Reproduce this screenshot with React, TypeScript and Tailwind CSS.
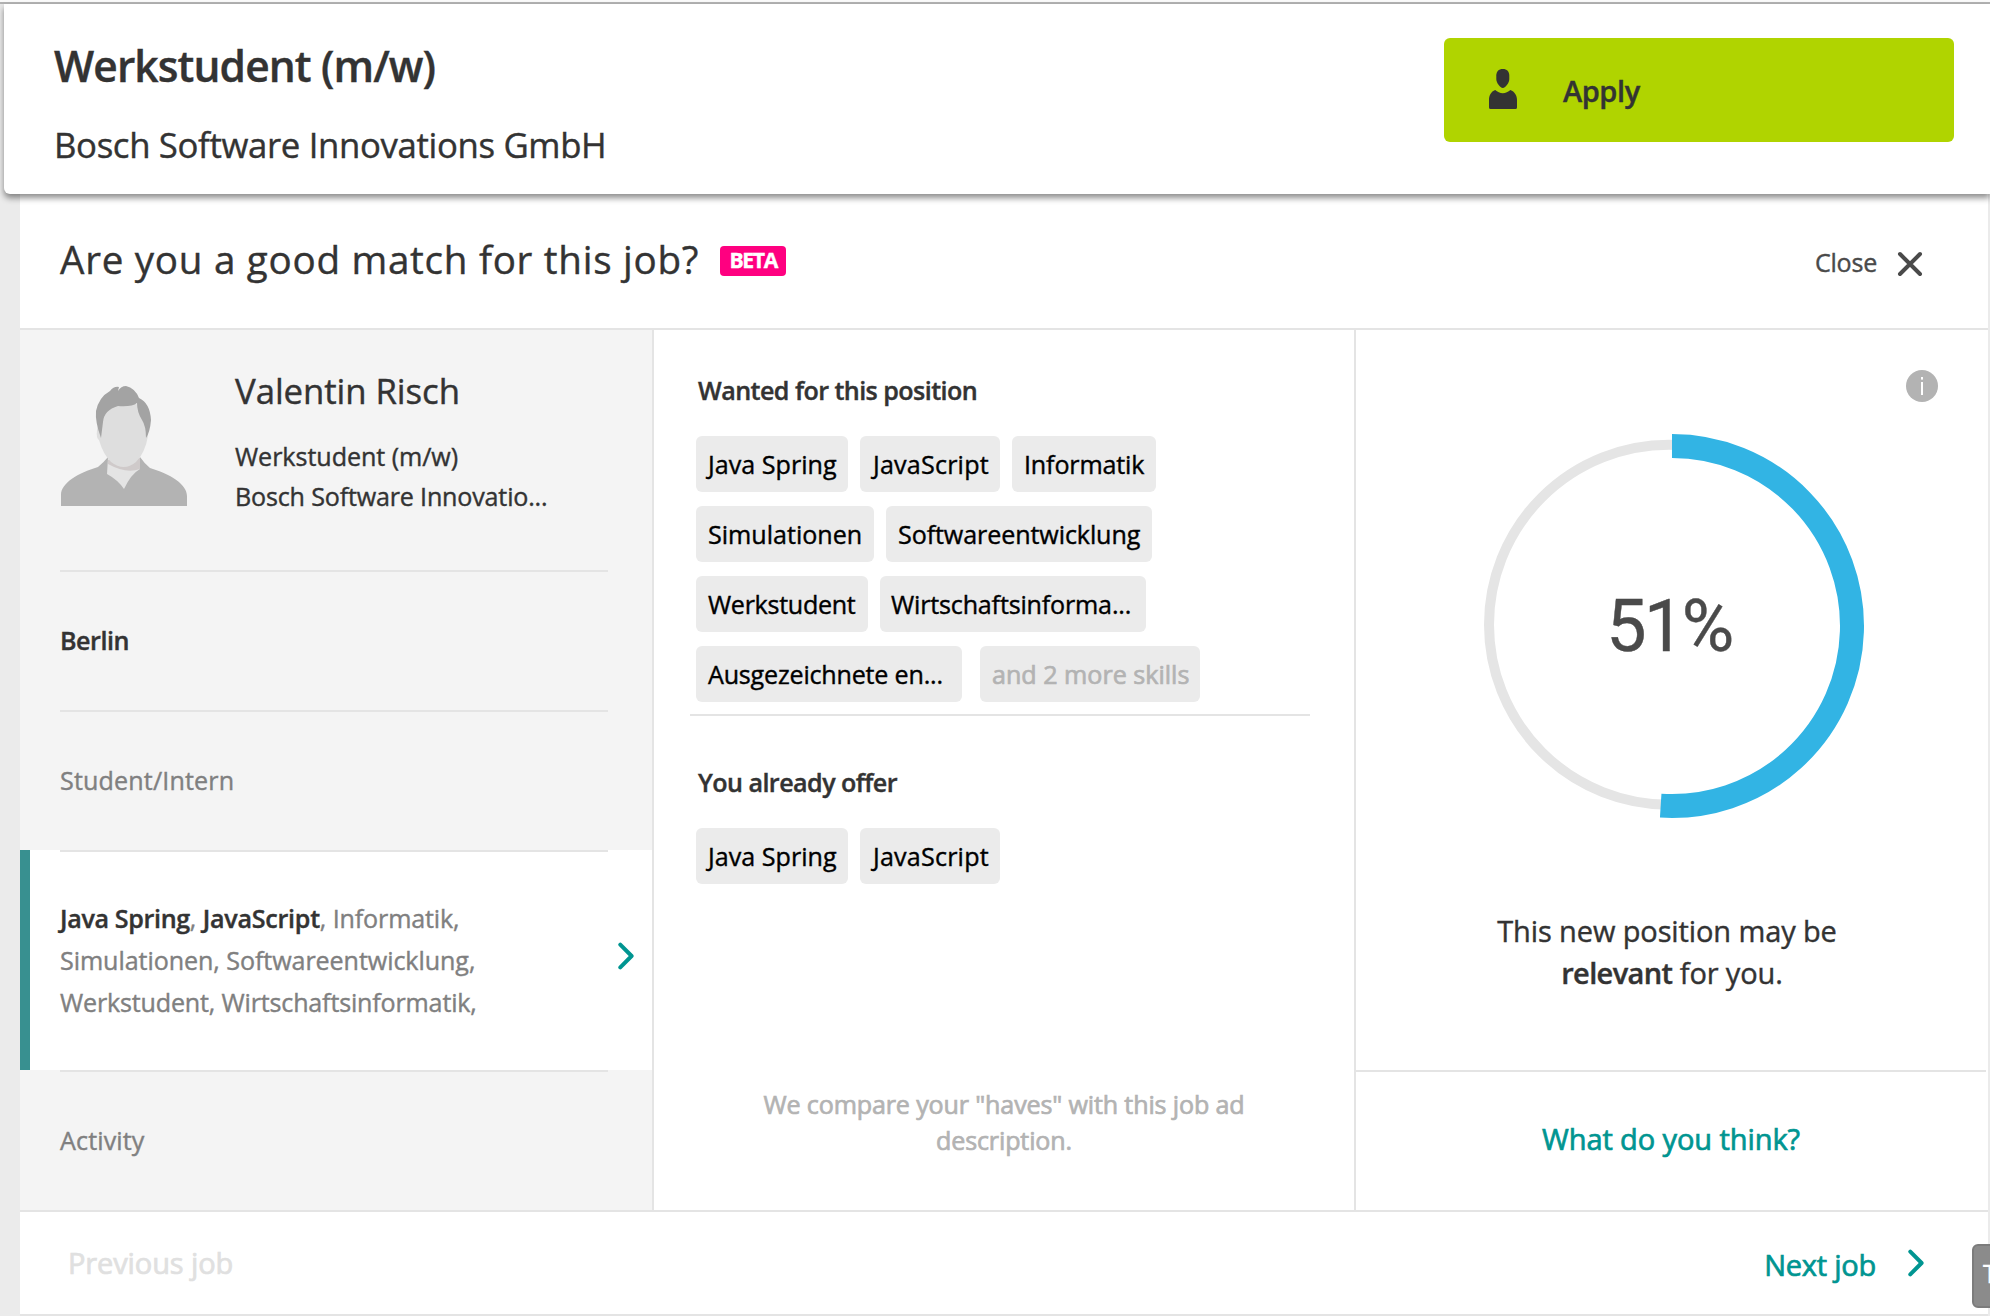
import type { ReactNode } from 'react';

type Skill = { label: string; className: string };

const wanted: Skill[][] = [
  [
    { label: 'Java Spring', className: 'w-[152px] tracking-[0.001em]' },
    { label: 'JavaScript', className: 'w-[140px] indent-[1px] tracking-[0.008em]' },
    { label: 'Informatik', className: 'w-[144px] tracking-[-0.006em]' },
  ],
  [
    { label: 'Simulationen', className: 'w-[178px]' },
    { label: 'Softwareentwicklung', className: 'w-[266px] tracking-[-0.004em]' },
  ],
  [
    { label: 'Werkstudent', className: 'w-[172px] tracking-[-0.012em]' },
    { label: 'Wirtschaftsinforma...', className: 'w-[266px] indent-[-1px] tracking-[-0.007em]' },
  ],
  [{ label: 'Ausgezeichnete en...', className: 'w-[266px] tracking-[-0.008em]' }],
];

const offered: Skill[] = wanted[0].slice(0, 2);

function Tag({ label, className }: Skill) {
  return (
    <span className={`h-14 rounded-md bg-[#ebebeb] px-3 leading-[56px] whitespace-nowrap text-black ${className}`}>
      {label}
    </span>
  );
}

function PersonIcon() {
  return (
    <svg width="28" height="40" viewBox="0 0 28 40" className="fill-[#333]">
      <path d="M13.8 0C18 0 20.3 2.7 20.3 6.6V10C20.3 13.6 16.6 19 13.8 19C11 19 7.3 13.6 7.3 10V6.6C7.3 2.7 9.6 0 13.8 0Z" />
      <path d="M6.2 21C8.4 22.6 11 24.2 13.8 24.2C16.6 24.2 19.2 22.6 21.4 21C25.6 22.6 28 26.6 28 30.8V38.4Q28 40 26.4 40H1.6Q0 40 0 38.4V30.8C0 26.6 2 22.6 6.2 21Z" />
    </svg>
  );
}

function Chevron() {
  return (
    <svg width="17" height="28" viewBox="0 0 17 28" fill="none" className="stroke-[#009591]">
      <path d="M2.3 2.6L13.6 14L2.3 25.4" strokeWidth="4" strokeLinecap="round" strokeLinejoin="round" />
    </svg>
  );
}

function Avatar() {
  return (
    <svg width="128" height="128" viewBox="0 0 128 128" className="bg-[#f4f4f4]">
      <path d="M1 128V117C1 105 18 95 38 89Q44 84 48 79H80Q84 85 90 90C110 96 127 106 127 118V128Z" fill="#b3b3b3" />
      <path d="M48 80L80 79V91Q71 96 64 111Q58 102 47 96Z" fill="#e4e4e4" />
      <path d="M48 82L80 80V91Q66 96 48 86Z" fill="#cfcaca" />
      <path d="M40 36Q43 24 64 24Q82 24 86 36L88 58Q85 75 76 84Q64 94 51 84Q43 76 39 62Q36 60 37 52Z" fill="#dedede" />
      <path d="M41 60Q35 44 36 33Q39 19 50 13Q54 8 59 9L58 13Q61 8 66 8Q75 10 79 20Q90 25 91 42Q90 54 86 60Q86 48 82 42Q77 34 77 25Q72 29 58 28Q44 32 43 44Z" fill="#a3a3a3" />
    </svg>
  );
}

function ProfileRow({ children }: { children: ReactNode }) {
  return (
    <div className="h-[140px] pr-11 pl-10">
      <div className="flex h-full items-center border-t-2 border-[#e4e4e4]">{children}</div>
    </div>
  );
}

function ScoreRing({ percent }: { percent: number }) {
  const angle = (percent / 100) * 2 * Math.PI;
  const endX = 196 + 180 * Math.sin(angle);
  const endY = 196 - 180 * Math.cos(angle);
  return (
    <div className="relative mt-7 ml-[120px] size-[392px]">
      <svg width="392" height="392" viewBox="0 0 392 392" fill="none">
        <circle cx="193" cy="194.7" r="180" stroke="#e5e5e5" strokeWidth="10" />
        <path d={`M196 16A180 180 0 1 1 ${endX} ${endY}`} stroke="#32b4e4" strokeWidth="24" />
      </svg>
      <div className="absolute inset-x-0 top-[147px] pr-1.5 text-center font-['Roboto',sans-serif] text-[71.7px] leading-[100px] tracking-[-0.035em] text-[#4a4a4a]">
        {percent}%
      </div>
    </div>
  );
}

export default function App() {
  return (
    <div className="relative flex h-[1316px] w-[1990px] flex-col overflow-hidden bg-[#ebebeb] font-['Open_Sans',sans-serif] text-[25.1px] text-[#333] [-webkit-text-stroke:0.4px]">
      <div className="h-1 shrink-0 border-b-2 border-[#b3b3b3] bg-[#fafafa]" />

      <header className="relative z-10 ml-1 flex h-[190px] shrink-0 items-start rounded-bl-md bg-white shadow-[0_4px_6px_0_rgba(0,0,0,0.45)]">
        <div className="pt-[34px] pl-[50px]">
          <h1 className="text-[42.5px] leading-[56px] font-semibold tracking-[-0.021em]">Werkstudent (m/w)</h1>
          <p className="mt-[29px] text-[34.75px] leading-[44px] tracking-[-0.01em]">Bosch Software Innovations GmbH</p>
        </div>
        <button className="mt-[34px] mr-9 ml-auto flex h-[104px] w-[510px] items-center rounded-md bg-[#b0d400] pb-0.5 pl-[45px]">
          <PersonIcon />
          <span className="mt-1 ml-[46px] text-[29px] font-semibold tracking-[-0.015em]">Apply</span>
        </button>
      </header>

      <main className="mr-0.5 ml-5 flex flex-1 flex-col bg-white">
        <section className="flex h-[136px] items-center border-b-2 border-[#e4e4e4] pr-[65px] pl-10">
          <h2 className="mb-[3px] text-[38.6px] tracking-[0.019em]">Are you a good match for this job?</h2>
          <span className="ml-[21px] h-[30px] w-[66px] rounded bg-[#ff0080] text-center text-[21.2px] leading-[28px] font-bold tracking-[-0.065em] text-white">
            BETA
          </span>
          <button className="ml-auto flex items-center pt-1 text-[#4a4a4a]">
            <span className="tracking-[-0.01em]">Close</span>
            <svg width="26" height="26" viewBox="0 0 26 26" className="mt-0.5 ml-5 stroke-[#4a4a4a]">
              <path d="M3 3L23 23M23 3L3 23" strokeWidth="4" strokeLinecap="round" />
            </svg>
          </button>
        </section>

        <section className="grid h-[880px] grid-cols-[634px_702px_632px]">
          <aside className="border-r-2 border-[#e4e4e4] bg-[#f4f4f4]">
            <div className="flex h-60 pt-12 pl-10">
              <Avatar />
              <div className="ml-[47px]">
                <div className="-mt-[9px] text-[34.75px] leading-[44px] tracking-[-0.002em]">Valentin Risch</div>
                <div className="mt-[23px] leading-10 tracking-[-0.002em]">Werkstudent (m/w)</div>
                <div className="leading-10 tracking-[-0.007em]">Bosch Software Innovatio...</div>
              </div>
            </div>
            <ProfileRow>
              <b className="font-semibold tracking-[-0.018em]">Berlin</b>
            </ProfileRow>
            <ProfileRow>
              <span className="tracking-[0.006em] text-[#808080]">Student/Intern</span>
            </ProfileRow>
            <div className="flex h-[220px] items-start border-l-10 border-[#389090] bg-white pl-[30px]">
              <p className="h-full w-[548px] border-t-2 border-[#e4e4e4] pt-[45px] leading-[42px] tracking-[-0.003em] text-[#808080]">
                <b className="font-semibold tracking-[-0.014em] text-[#333]">Java Spring</b>,{' '}
                <b className="font-semibold tracking-[-0.01em] text-[#333]">JavaScript</b>,{' '}
                <span className="tracking-[-0.006em]">Informatik,</span>
                <br />
                Simulationen, Softwareentwicklung,
                <br />
                <span className="tracking-[-0.007em]">Werkstudent, Wirtschaftsinformatik,</span>
              </p>
              <div className="mt-[92px] ml-2.5">
                <Chevron />
              </div>
            </div>
            <ProfileRow>
              <span className="tracking-[0.005em] text-[#808080]">Activity</span>
            </ProfileRow>
          </aside>

          <div className="flex flex-col border-r-2 border-[#e4e4e4] pt-10 pr-11 pl-9">
            <h3 className="pl-2 leading-10 font-semibold tracking-[-0.022em]">Wanted for this position</h3>
            <div className="mt-[26px] flex flex-col gap-3.5 pl-1.5">
              {wanted.map((row, i) => (
                <div key={row[0].label} className="flex gap-3">
                  {row.map((skill) => (
                    <Tag key={skill.label} {...skill} />
                  ))}
                  {i === wanted.length - 1 && (
                    <span className="ml-1.5 h-14 w-[220px] rounded-md bg-[#ebebeb] px-3 leading-[56px] whitespace-nowrap text-[#b3b3b3] [-webkit-text-stroke:0.7px]">
                      and 2 more skills
                    </span>
                  )}
                </div>
              ))}
            </div>
            <div className="mt-3 border-t-2 border-[#e4e4e4]" />
            <h3 className="mt-[46px] pl-2 leading-10 font-semibold tracking-[-0.022em]">You already offer</h3>
            <div className="mt-[26px] flex gap-3 pl-1.5">
              {offered.map((skill) => (
                <Tag key={skill.label} {...skill} />
              ))}
            </div>
            <p className="mt-auto -mr-2 pb-[52px] text-center leading-9 tracking-[-0.006em] text-[#b3b3b3] [-webkit-text-stroke:0.7px]">
              We compare your "haves" with this job ad
              <br />
              description.
            </p>
          </div>

          <div className="flex flex-col">
            <div className="mt-10 mr-[50px] flex size-8 items-center justify-center self-end rounded-full bg-[#b3b3b3]">
              <svg width="4" height="20" viewBox="0 0 4 20" fill="#fff">
                <rect x="1" y="1" width="2" height="2.6" />
                <rect x="1" y="6" width="2" height="13" />
              </svg>
            </div>
            <ScoreRing percent={51} />
            <p className="mt-[88px] text-center text-[29px] leading-[42px] tracking-[-0.004em]">
              <span className="pr-2.5">This new position may be</span>
              <br />
              <b className="font-semibold tracking-[-0.022em]">relevant</b> for you.
            </p>
            <div className="mt-auto mr-0.5 flex h-[140px] items-center justify-center border-t-2 border-[#e4e4e4] pb-1">
              <a className="text-[29px] tracking-[-0.003em] text-[#009591] [-webkit-text-stroke:0.7px]">What do you think?</a>
            </div>
          </div>
        </section>

        <footer className="flex h-[106px] items-center border-y-2 border-[#e4e4e4] pr-[63px] pl-12 text-[29px] [-webkit-text-stroke:0.7px]">
          <span className="tracking-[-0.004em] text-[#e0e0e0]">Previous job</span>
          <a className="ml-auto flex items-center text-[#009591]">
            <span className="mt-1 mr-8 tracking-[-0.008em]">Next job</span>
            <Chevron />
          </a>
        </footer>
      </main>

      <button className="absolute top-[1244px] left-[1972px] h-16 w-20 rounded-md border-2 border-[#7c7c7c] bg-[#8b8b8b] pb-1 pl-[9px] text-left text-white">
        T
      </button>
    </div>
  );
}
